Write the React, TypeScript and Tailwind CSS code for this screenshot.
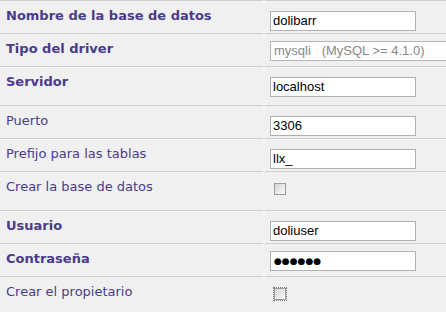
import React from "react";

type Row = {
  label: string;
  bold?: boolean;
  kind: "text" | "select" | "password" | "checkbox";
  value?: string;
  last?: boolean;
  focus?: boolean;
};

const ROWS: Row[] = [
  { label: "Nombre de la base de datos", bold: true, kind: "text", value: "dolibarr" },
  { label: "Tipo del driver", bold: true, kind: "select", value: "mysqli   (MySQL >= 4.1.0)" },
  { label: "Servidor", bold: true, kind: "text", value: "localhost", last: true },
  { label: "Puerto", kind: "text", value: "3306" },
  { label: "Prefijo para las tablas", kind: "text", value: "llx_" },
  { label: "Crear la base de datos", kind: "checkbox", last: true },
  { label: "Usuario", bold: true, kind: "text", value: "doliuser" },
  { label: "Contraseña", bold: true, kind: "password", value: "●●●●●●" },
  { label: "Crear el propietario", kind: "checkbox", focus: true, last: true },
];

function Field({ row }: { row: Row }) {
  if (row.kind === "checkbox") {
    return (
      <div
        className={`mt-[4px] ml-[4px] h-[12px] w-[12px] border border-[#9c9c9c] bg-gradient-to-br from-[#d4d4d4] to-[#fbfbfb] ${
          row.focus ? "outline outline-1 outline-dotted outline-[#777] outline-offset-0" : ""
        }`}
      />
    );
  }
  if (row.kind === "select") {
    return (
      <div className="h-[20px] w-[240px] shrink-0 border border-[#b5b5b5] bg-[#fdfdfd] pl-[3px] text-[13px] leading-[18px] text-[#8a8a8a] whitespace-pre font-['Liberation_Sans',Arial,sans-serif]">
        {row.value}
      </div>
    );
  }
  if (row.kind === "password") {
    return (
      <div className="h-[20px] w-[146px] border border-[#b0b0b0] bg-white pl-[3px] text-[9px] leading-[18px] text-black font-['DejaVu_Sans',sans-serif]">
        {row.value}
      </div>
    );
  }
  return (
    <input
      readOnly
      type="text"
      defaultValue={row.value}
      className="h-[20px] w-[146px] border border-[#b0b0b0] bg-white px-[2px] text-[13px] leading-[18px] text-black outline-none font-['Liberation_Sans',Arial,sans-serif]"
    />
  );
}

export default function App() {
  return (
    <div className="h-[312px] w-[446px] overflow-hidden bg-[#f0f0f0] font-['DejaVu_Sans',Verdana,sans-serif]">
      {ROWS.map((row, i) => (
        <div key={i} className={`flex ${row.last ? "h-[39px]" : "h-[33px]"}`}>
          <div
            className={`w-[263px] shrink-0 border-t border-[#cfcfd8] pl-[6px] pt-[6px] text-[13px] leading-[17px] text-[#4a3b8c] ${
              row.bold ? "font-bold" : ""
            }`}
          >
            {row.label}
          </div>
          <div className="ml-[2px] flex-1 border-t border-[#cfcfd8] pl-[5px] pt-[7px]">
            <Field row={row} />
          </div>
        </div>
      ))}
    </div>
  );
}
